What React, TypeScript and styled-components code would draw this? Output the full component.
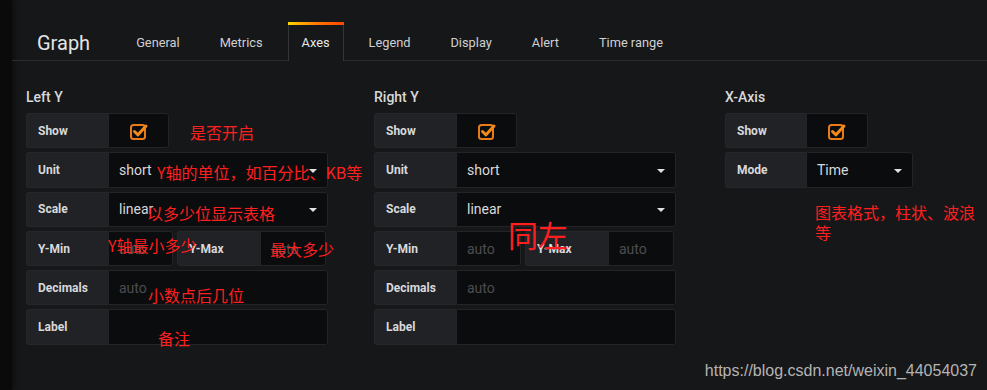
import styled, { createGlobalStyle } from "styled-components";

const GlobalStyle = createGlobalStyle`
  html, body {
    margin: 0;
    padding: 0;
    background: #161719;
  }
  body {
    font-family: Roboto, "Noto Sans", sans-serif;
    color: #d8d9da;
  }
`;

const Page = styled.div`
  position: relative;
  width: 987px;
  height: 390px;
  display: flex;
  overflow: hidden;
  background: #161719;
`;

const SideStrip = styled.div`
  width: 12px;
  flex-shrink: 0;
  background: #0a0a0b;
  box-shadow: 1px 0 6px rgba(0, 0, 0, 0.6);
`;

const Main = styled.div`
  flex: 1;
  display: flex;
  flex-direction: column;
`;

const Header = styled.div`
  height: 61px;
  box-sizing: border-box;
  display: flex;
  align-items: flex-end;
  padding-left: 25px;
  border-bottom: 1px solid #2a2b2e;
`;

const Title = styled.div`
  height: 38px;
  line-height: 38px;
  font-size: 20px;
  color: #e3e4e5;
  margin-right: 31px;
  margin-bottom: -2px;
`;

const Tabs = styled.div`
  display: flex;
  gap: 10px;
`;

const Tab = styled.div<{ $active?: boolean }>`
  position: relative;
  height: 39px;
  line-height: 41px;
  box-sizing: border-box;
  padding: 0 ${(p) => (p.$active ? 13 : 14)}px;
  margin-bottom: -1px;
  font-size: 12.8px;
  color: ${(p) => (p.$active ? "#e6e7e8" : "#cfd0d1")};
  background: ${(p) => (p.$active ? "#161719" : "transparent")};
  border-left: 1px solid ${(p) => (p.$active ? "#333438" : "transparent")};
  border-right: 1px solid ${(p) => (p.$active ? "#333438" : "transparent")};
  &::before {
    content: "";
    display: ${(p) => (p.$active ? "block" : "none")};
    position: absolute;
    top: 0;
    left: -1px;
    right: -1px;
    height: 3px;
    background: linear-gradient(90deg, #ffd500, #ff7a00 50%, #ff4500);
  }
`;

const Body = styled.div`
  display: flex;
  padding: 28px 0 0 14px;
`;

const Section = styled.div<{ $w?: number }>`
  width: ${(p) => (p.$w ? `${p.$w}px` : "auto")};
  flex-shrink: 0;
`;

const SectionTitle = styled.div`
  font-size: 14px;
  font-weight: 500;
  line-height: 16px;
  color: #d8d9da;
  margin-bottom: 8px;
`;

const FormRow = styled.div`
  display: flex;
  gap: 4px;
  margin-bottom: 4px;
`;

const Field = styled.div`
  display: flex;
  height: 35.3px;
`;

const FieldLabel = styled.div<{ $w?: number }>`
  width: ${(p) => p.$w ?? 82}px;
  box-sizing: border-box;
  padding-left: 11px;
  display: flex;
  align-items: center;
  font-size: 12px;
  font-weight: 700;
  color: #d8d9da;
  background: #202226;
  border: 1px solid #26272b;
  border-right: none;
  border-radius: 3px 0 0 3px;
`;

const FieldInput = styled.div<{ $w: number; $muted?: boolean; $center?: boolean }>`
  width: ${(p) => p.$w}px;
  box-sizing: border-box;
  display: flex;
  align-items: center;
  justify-content: ${(p) => (p.$center ? "center" : "space-between")};
  padding: 0 ${(p) => (p.$center ? 0 : 10)}px;
  font-size: 14px;
  color: ${(p) => (p.$muted ? "#4b4c50" : "#d8d9da")};
  background: #0b0c0e;
  border: 1px solid #232428;
  border-radius: 0 3px 3px 0;
`;

const Caret = styled.span`
  width: 0;
  height: 0;
  border-left: 4px solid transparent;
  border-right: 4px solid transparent;
  border-top: 4px solid #e0e1e2;
  margin-top: 2px;
`;

const Note = styled.div<{ $x: number; $y: number; $size?: number; $w?: number }>`
  position: absolute;
  left: ${(p) => p.$x}px;
  top: ${(p) => p.$y}px;
  width: ${(p) => (p.$w ? `${p.$w}px` : "auto")};
  white-space: ${(p) => (p.$w ? "normal" : "nowrap")};
  font-family: "Noto Sans CJK SC", "Noto Sans", sans-serif;
  font-size: ${(p) => p.$size ?? 16}px;
  line-height: 20px;
  color: #ff1f1f;
  pointer-events: none;
`;

const Watermark = styled.div`
  position: absolute;
  right: 10px;
  top: 361px;
  font-family: "Liberation Sans", Arial, sans-serif;
  font-size: 16px;
  line-height: 20px;
  color: #b4b4b4;
`;

const CheckIcon = () => (
  <svg width="20" height="20" viewBox="0 0 20 20">
    <rect x="2" y="4" width="14" height="14" rx="2.5" fill="none" stroke="#eb7b18" strokeWidth="2" />
    <path d="M5.5 10.5 L9 13.8 L17 5" fill="none" stroke="#f08a1c" strokeWidth="3" strokeLinecap="round" strokeLinejoin="round" />
  </svg>
);

type AxisProps = { title: string; width: number };

const YAxis = ({ title, width }: AxisProps) => (
  <Section $w={width}>
    <SectionTitle>{title}</SectionTitle>
    <FormRow>
      <Field>
        <FieldLabel>Show</FieldLabel>
        <FieldInput $w={61} $center>
          <CheckIcon />
        </FieldInput>
      </Field>
    </FormRow>
    <FormRow>
      <Field>
        <FieldLabel>Unit</FieldLabel>
        <FieldInput $w={220}>
          short
          <Caret />
        </FieldInput>
      </Field>
    </FormRow>
    <FormRow>
      <Field>
        <FieldLabel>Scale</FieldLabel>
        <FieldInput $w={220}>
          linear
          <Caret />
        </FieldInput>
      </Field>
    </FormRow>
    <FormRow>
      <Field>
        <FieldLabel>Y-Min</FieldLabel>
        <FieldInput $w={65} $muted>
          auto
        </FieldInput>
      </Field>
      <Field>
        <FieldLabel $w={83}>Y-Max</FieldLabel>
        <FieldInput $w={66} $muted>
          auto
        </FieldInput>
      </Field>
    </FormRow>
    <FormRow>
      <Field>
        <FieldLabel>Decimals</FieldLabel>
        <FieldInput $w={220} $muted>
          auto
        </FieldInput>
      </Field>
    </FormRow>
    <FormRow>
      <Field>
        <FieldLabel>Label</FieldLabel>
        <FieldInput $w={220} />
      </Field>
    </FormRow>
  </Section>
);

const tabs = ["General", "Metrics", "Axes", "Legend", "Display", "Alert", "Time range"];

export default function App() {
  return (
    <>
      <GlobalStyle />
      <Page>
        <SideStrip />
        <Main>
          <Header>
            <Title>Graph</Title>
            <Tabs>
              {tabs.map((t) => (
                <Tab key={t} $active={t === "Axes"}>
                  {t}
                </Tab>
              ))}
            </Tabs>
          </Header>
          <Body>
            <YAxis title="Left Y" width={348} />
            <YAxis title="Right Y" width={351} />
            <Section>
              <SectionTitle>X-Axis</SectionTitle>
              <FormRow>
                <Field>
                  <FieldLabel $w={81}>Show</FieldLabel>
                  <FieldInput $w={62} $center>
                    <CheckIcon />
                  </FieldInput>
                </Field>
              </FormRow>
              <FormRow>
                <Field>
                  <FieldLabel $w={81}>Mode</FieldLabel>
                  <FieldInput $w={107}>
                    Time
                    <Caret />
                  </FieldInput>
                </Field>
              </FormRow>
            </Section>
          </Body>
        </Main>

        <Note $x={190} $y={122}>是否开启</Note>
        <Note $x={157} $y={162}>Y轴的单位，如百分比、KB等</Note>
        <Note $x={147} $y={203}>以多少位显示表格</Note>
        <Note $x={108} $y={235}>Y轴最小多少</Note>
        <Note $x={270} $y={239}>最大多少</Note>
        <Note $x={148} $y={285}>小数点后几位</Note>
        <Note $x={158} $y={328}>备注</Note>
        <Note $x={508} $y={224} $size={30}>同左</Note>
        <Note $x={815} $y={202} $w={162}>图表格式，柱状、波浪等</Note>
        <Watermark>https://blog.csdn.net/weixin_44054037</Watermark>
      </Page>
    </>
  );
}
